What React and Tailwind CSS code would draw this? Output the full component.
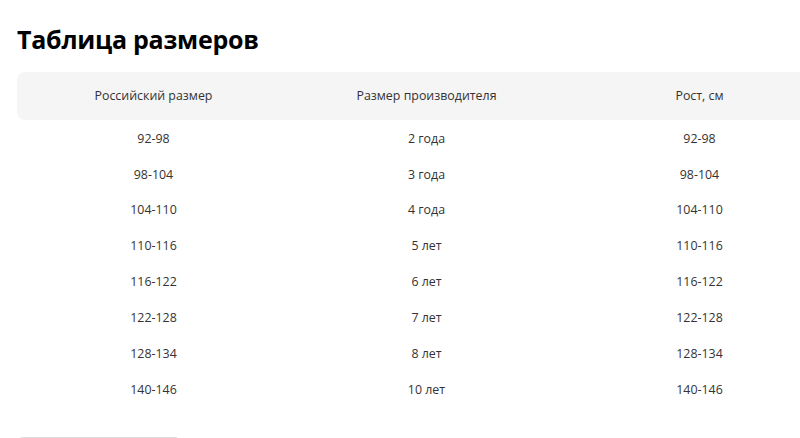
export default function App() {
  const rows = [
    ["92-98", "2 года", "92-98"],
    ["98-104", "3 года", "98-104"],
    ["104-110", "4 года", "104-110"],
    ["110-116", "5 лет", "110-116"],
    ["116-122", "6 лет", "116-122"],
    ["122-128", "7 лет", "122-128"],
    ["128-134", "8 лет", "128-134"],
    ["140-146", "10 лет", "140-146"],
  ];
  return (
    <div className="w-[800px] h-[438px] overflow-hidden bg-white pl-[17px] pt-[22px] text-[#333]" style={{ fontFamily: '"Open Sans", "Noto Sans", sans-serif' }}>
      <h1 className="text-[25px] leading-[34px] font-bold text-black tracking-[-0.25px]">Таблица размеров</h1>
      <div className="w-[819px] mt-[16px]">
        <div className="grid grid-cols-3 h-[48px] items-center bg-[#f5f5f5] rounded-[8px] text-[12.4px] text-[#333]">
          <div className="text-center">Российский размер</div>
          <div className="text-center">Размер производителя</div>
          <div className="text-center">Рост, см</div>
        </div>
        <div className="pt-[1px]">
          {rows.map((r, i) => (
            <div key={i} className="grid grid-cols-3 h-[35.9px] items-center text-[12.4px] text-[#333]">
              <div className="text-center">{r[0]}</div>
              <div className="text-center">{r[1]}</div>
              <div className="text-center">{r[2]}</div>
            </div>
          ))}
        </div>
        <div className="mt-[29px] w-[164px] h-[40px] border border-[#dcdcdc] rounded-[6px]"></div>
      </div>
    </div>
  );
}
